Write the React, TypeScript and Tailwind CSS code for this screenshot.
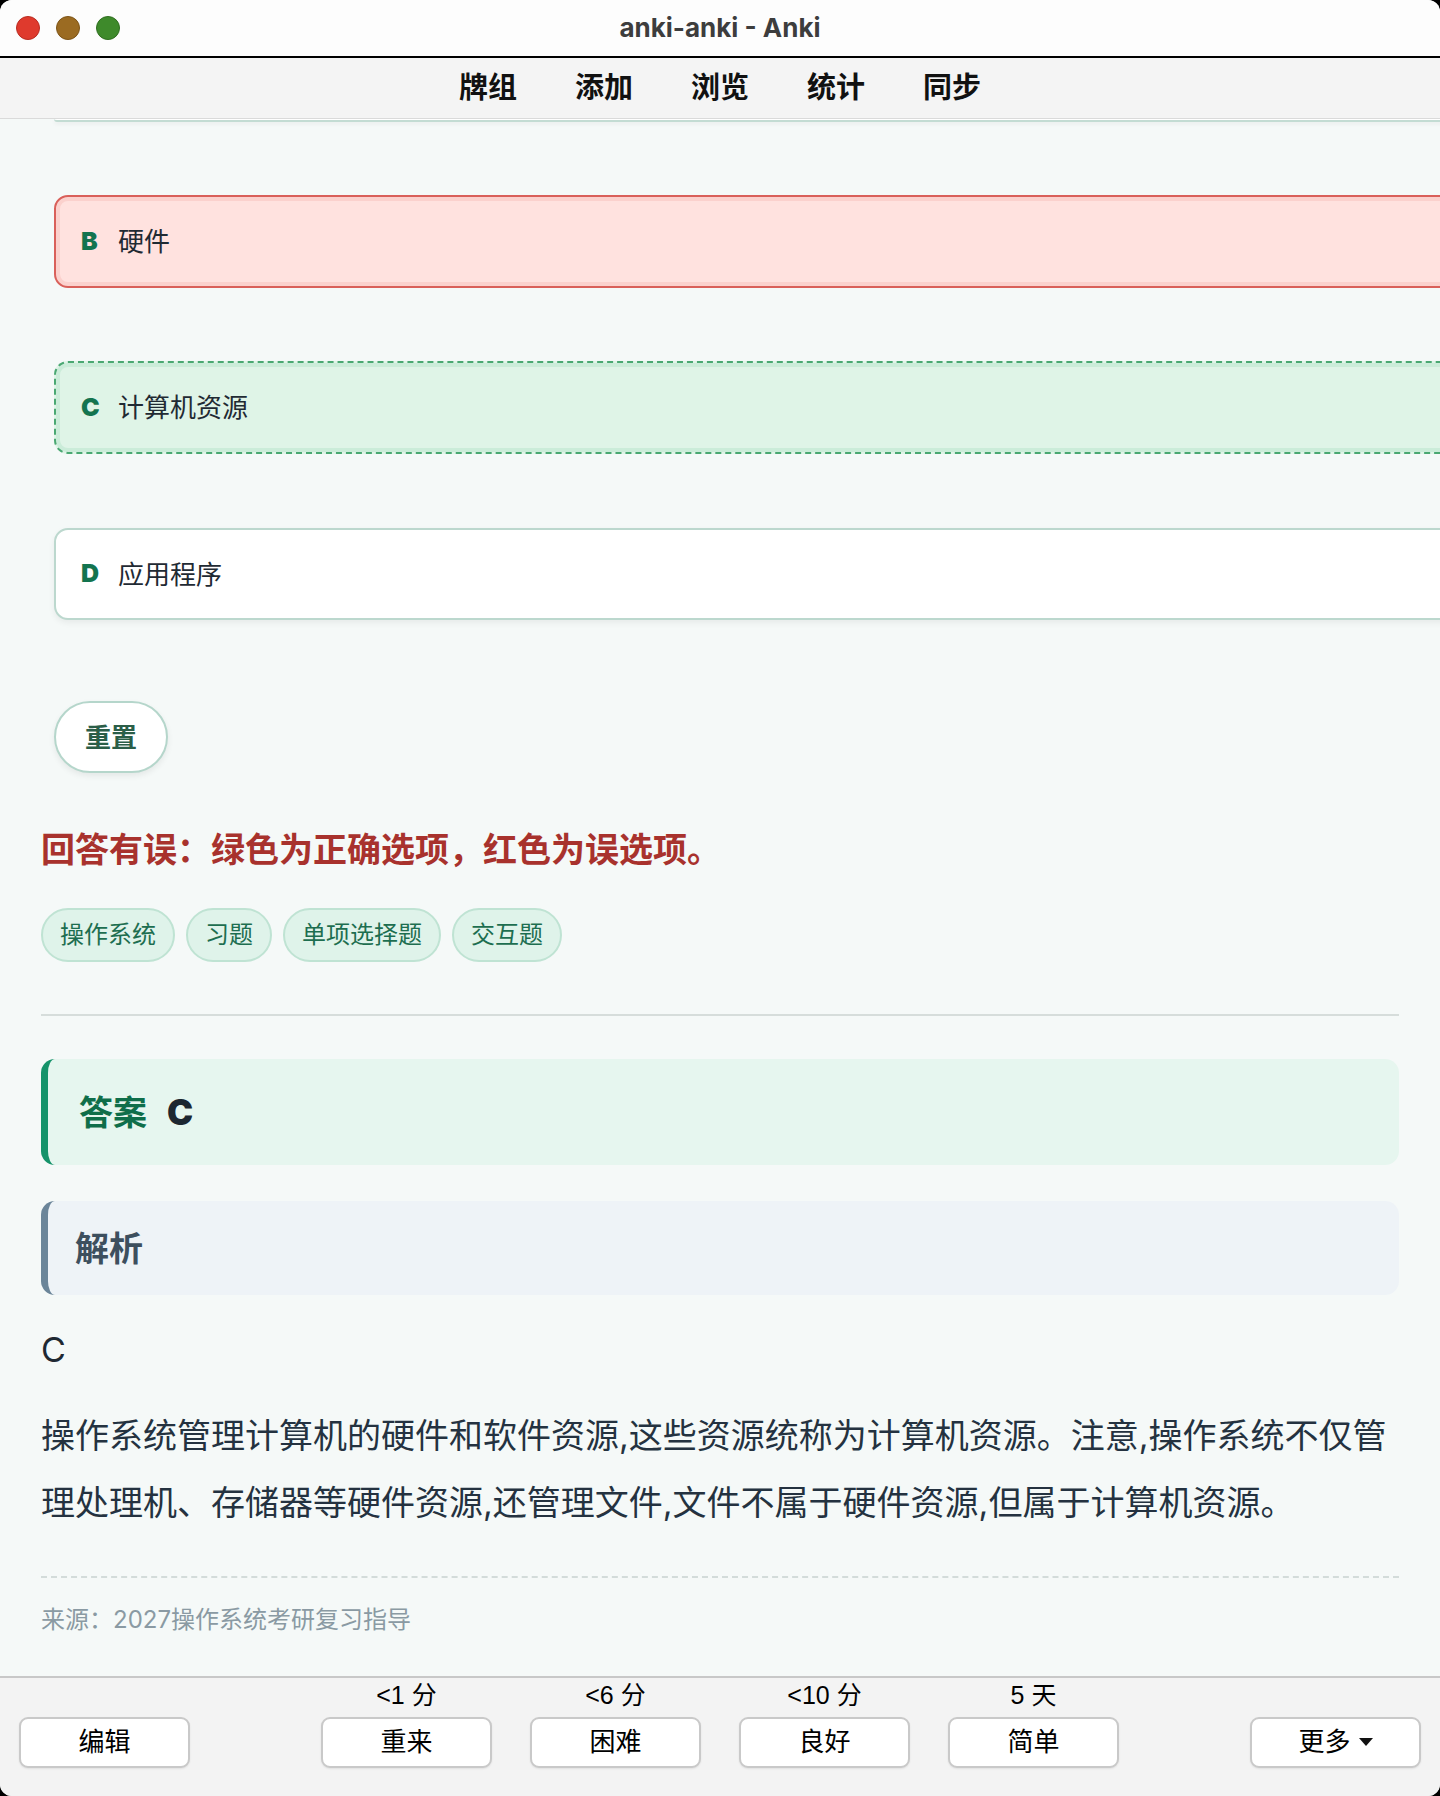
import React from "react";

const optBase =
  "ml-[54px] w-[1420px] rounded-[14px] flex items-center pl-[25px] text-[26px] text-[#1f2a33]";

function Letter({ c }: { c: string }) {
  return (
    <span className="w-[37px] shrink-0 font-black text-[25px] text-[#13744f] font-['Inter',sans-serif]">
      {c}
    </span>
  );
}

const btn =
  "w-[171px] h-[51px] bg-white border-2 border-[#c9c9c9] rounded-[9px] shadow-[0_1px_2px_rgba(0,0,0,0.08)] text-[26px] text-black";

function Rate({ label, text }: { label: string; text: string }) {
  return (
    <div className="flex flex-col items-center">
      <div className="h-[26px] leading-[26px] text-[25px] text-black mb-[9px]">{label}</div>
      <button className={btn}>{text}</button>
    </div>
  );
}

export default function App() {
  return (
    <div className="w-[1440px] h-[1796px] bg-black">
      <div className="w-full h-full rounded-[12px] overflow-hidden bg-[#f5f9f8] flex flex-col font-['Inter','Noto_Sans_CJK_SC',sans-serif]">
        {/* title bar */}
        <div className="h-[56px] shrink-0 bg-[#fdfdfd] grid grid-cols-[1fr_auto_1fr] items-center px-[16px]">
          <div className="flex gap-[16px] items-center">
            <span className="w-[24px] h-[24px] rounded-full bg-[#df3a2d] border border-[#b92c21]" />
            <span className="w-[24px] h-[24px] rounded-full bg-[#9b6b22] border border-[#7d5417]" />
            <span className="w-[24px] h-[24px] rounded-full bg-[#3e8a2b] border border-[#2f6e20]" />
          </div>
          <span className="text-[26px] font-bold text-[#3d3d3d] font-['Inter',sans-serif] -mt-[2px]">
            anki-anki - Anki
          </span>
          <div />
        </div>
        <div className="h-[2px] bg-black shrink-0" />
        {/* menu bar */}
        <div className="h-[61px] shrink-0 bg-[#f4f4f4] border-b border-[#dadada] flex items-center justify-center gap-[58px] pb-[4px] text-[29px] font-bold text-[#111] font-['Noto_Sans_CJK_SC',sans-serif]">
          <span>牌组</span>
          <span>添加</span>
          <span>浏览</span>
          <span>统计</span>
          <span>同步</span>
        </div>

        {/* content */}
        <div className="flex-1 overflow-hidden">
          <div className="ml-[54px] w-[1420px] h-[3px] rounded-b-[6px] bg-white border-b-2 border-[#c3dcd3] shadow-[0_2px_4px_rgba(0,0,0,0.06)]" />

          <div
            className={`${optBase} mt-[73px] h-[93px] bg-[#ffe2df] border-2 border-[#d9605a] shadow-[inset_0_0_0_4px_#fbd1cd]`}
          >
            <Letter c="B" />
            <span>硬件</span>
          </div>

          <div
            className={`${optBase} mt-[73px] h-[93px] bg-[#dff4e7] border-2 border-dashed border-[#4aa872] shadow-[inset_0_0_0_4px_#cbecd9]`}
          >
            <Letter c="C" />
            <span>计算机资源</span>
          </div>

          <div
            className={`${optBase} mt-[74px] h-[92px] bg-white border-2 border-[#bcd8ce] shadow-[0_3px_6px_rgba(0,0,0,0.06)]`}
          >
            <Letter c="D" />
            <span>应用程序</span>
          </div>

          <button className="ml-[54px] mt-[81px] w-[114px] h-[72px] rounded-full bg-white border-2 border-[#b5d6cb] shadow-[0_3px_6px_rgba(0,0,0,0.07)] text-[26px] font-bold text-[#2b5e48] block">
            重置
          </button>

          <div className="px-[41px]">
            <div className="mt-[53px] text-[34px] leading-[48px] font-bold text-[#a8322d]">
              回答有误：绿色为正确选项，红色为误选项。
            </div>

            <div className="mt-[34px] flex gap-[11px]">
              {["操作系统", "习题", "单项选择题", "交互题"].map((t) => (
                <span
                  key={t}
                  className="h-[54px] px-[17px] flex items-center rounded-full bg-[#dff3ea] border-2 border-[#bfe3d3] text-[24px] text-[#1d6e50]"
                >
                  {t}
                </span>
              ))}
            </div>

            <div className="mt-[52px] h-[2px] bg-[#d6dddb] w-[1358px]" />

            <div className="mt-[43px] w-[1358px] h-[106px] rounded-[14px] bg-[#e6f6ef] border-l-[7px] border-[#15936a] flex items-center pl-[31px] text-[34px] font-bold">
              <span className="text-[#0f6e4a]">答案</span>
              <span className="ml-[20px] text-[#1c2731] font-['Inter',sans-serif] font-black text-[35px]">C</span>
            </div>

            <div className="mt-[36px] w-[1358px] h-[94px] rounded-[14px] bg-[#eef3f7] border-l-[7px] border-[#6b8599] flex items-center pl-[27px] text-[34px] font-bold text-[#3d4f5e]">
              解析
            </div>

            <div className="mt-[31px] text-[34px] leading-[48px] text-[#1f2933]">C</div>

            <div className="mt-[28px] text-[34px] leading-[67px] text-[#243240] w-[1358px] whitespace-nowrap">
              操作系统管理计算机的硬件和软件资源,这些资源统称为计算机资源。注意,操作系统不仅管
              <br />
              理处理机、存储器等硬件资源,还管理文件,文件不属于硬件资源,但属于计算机资源。
            </div>

            <div className="mt-[40px] w-[1358px] border-t-2 border-dashed border-[#d3dcda]" />

            <div className="mt-[26px] text-[24px] leading-[32px] text-[#8a9aa3]">
              来源：2027操作系统考研复习指导
            </div>
          </div>
        </div>

        {/* bottom bar */}
        <div className="h-[120px] shrink-0 border-t-2 border-[#c8c8c8] bg-[#f3f3f3] flex items-end justify-between px-[19px] pb-[28px] font-['Liberation_Sans','Noto_Sans_CJK_SC',sans-serif]">
          <button className={btn}>编辑</button>
          <div className="flex gap-[38px]">
            <Rate label="<1 分" text="重来" />
            <Rate label="<6 分" text="困难" />
            <Rate label="<10 分" text="良好" />
            <Rate label="5 天" text="简单" />
          </div>
          <button className={`${btn} flex items-center justify-center gap-[8px]`}>
            <span>更多</span>
            <svg width="14" height="9" viewBox="0 0 14 9">
              <path d="M0 0 L14 0 L7 8 Z" fill="#111" />
            </svg>
          </button>
        </div>
      </div>
    </div>
  );
}
